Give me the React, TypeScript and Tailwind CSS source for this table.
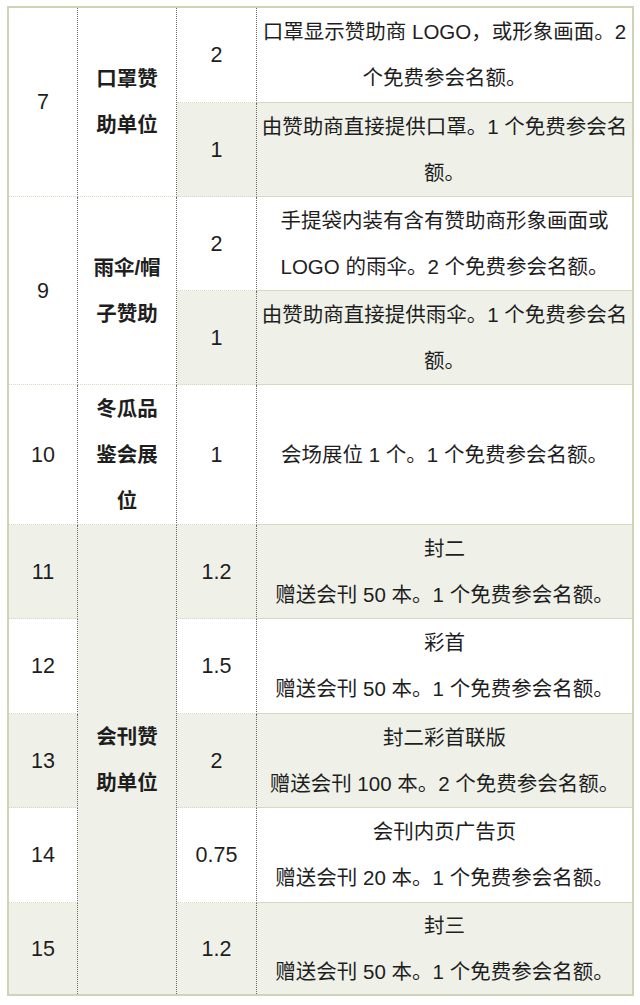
import React from 'react';

const font = { fontFamily: '"Liberation Sans", "Noto Sans CJK SC", sans-serif' };

type CellProps = {
  pos: string;
  gray?: boolean;
  last?: boolean;
  bottom?: boolean;
  bold?: boolean;
  num?: boolean;
  children: React.ReactNode;
};

function Cell({ pos, gray, last, bottom, bold, num, children }: CellProps) {
  return (
    <div
      className={[
        pos,
        'flex flex-col items-center justify-center text-center whitespace-nowrap leading-[46px] text-[#1e1e1e]',
        num ? 'text-[21.5px]' : 'text-[20.5px]',
        gray ? 'bg-[#eff1e9]' : 'bg-white',
        last ? '' : 'border-r border-dotted border-r-[#6a6a6a]',
        bottom ? '' : 'border-b border-b-[#d3dbbf]',
        bold ? 'font-bold' : 'font-normal',
      ].join(' ')}
    >
      {children}
    </div>
  );
}

export default function App() {
  return (
    <div className="min-h-screen bg-white pt-[6px] pl-[7px]" style={font}>
      <div className="grid w-fit grid-cols-[69px_99px_80px_375px] grid-rows-[95px_94px_94px_94px_140px_94px_95px_94px_95px_91px] border-2 border-[#cdd5b6]">
        {/* 7 */}
        <Cell pos="col-start-1 row-start-1 row-span-2" num>7</Cell>
        <Cell pos="col-start-2 row-start-1 row-span-2" bold>
          <span>口罩赞</span>
          <span>助单位</span>
        </Cell>
        <Cell pos="col-start-3 row-start-1" num>2</Cell>
        <Cell pos="col-start-4 row-start-1" last>
          <span>口罩显示赞助商 LOGO，或形象画面。2</span>
          <span>个免费参会名额。</span>
        </Cell>
        <Cell pos="col-start-3 row-start-2" gray num>1</Cell>
        <Cell pos="col-start-4 row-start-2" gray last>
          <span>由赞助商直接提供口罩。1 个免费参会名</span>
          <span>额。</span>
        </Cell>

        {/* 9 */}
        <Cell pos="col-start-1 row-start-3 row-span-2" num>9</Cell>
        <Cell pos="col-start-2 row-start-3 row-span-2" bold>
          <span>雨伞/帽</span>
          <span>子赞助</span>
        </Cell>
        <Cell pos="col-start-3 row-start-3" num>2</Cell>
        <Cell pos="col-start-4 row-start-3" last>
          <span>手提袋内装有含有赞助商形象画面或</span>
          <span>LOGO 的雨伞。2 个免费参会名额。</span>
        </Cell>
        <Cell pos="col-start-3 row-start-4" gray num>1</Cell>
        <Cell pos="col-start-4 row-start-4" gray last>
          <span>由赞助商直接提供雨伞。1 个免费参会名</span>
          <span>额。</span>
        </Cell>

        {/* 10 */}
        <Cell pos="col-start-1 row-start-5" num>10</Cell>
        <Cell pos="col-start-2 row-start-5" bold>
          <span>冬瓜品</span>
          <span>鉴会展</span>
          <span>位</span>
        </Cell>
        <Cell pos="col-start-3 row-start-5" num>1</Cell>
        <Cell pos="col-start-4 row-start-5" last>
          会场展位 1 个。1 个免费参会名额。
        </Cell>

        {/* 11 - 15 */}
        <Cell pos="col-start-2 row-start-6 row-span-5" gray bold bottom>
          <span>会刊赞</span>
          <span>助单位</span>
        </Cell>

        <Cell pos="col-start-1 row-start-6" gray num>11</Cell>
        <Cell pos="col-start-3 row-start-6" gray num>1.2</Cell>
        <Cell pos="col-start-4 row-start-6" gray last>
          <span>封二</span>
          <span>赠送会刊 50 本。1 个免费参会名额。</span>
        </Cell>

        <Cell pos="col-start-1 row-start-7" num>12</Cell>
        <Cell pos="col-start-3 row-start-7" num>1.5</Cell>
        <Cell pos="col-start-4 row-start-7" last>
          <span>彩首</span>
          <span>赠送会刊 50 本。1 个免费参会名额。</span>
        </Cell>

        <Cell pos="col-start-1 row-start-8" gray num>13</Cell>
        <Cell pos="col-start-3 row-start-8" gray num>2</Cell>
        <Cell pos="col-start-4 row-start-8" gray last>
          <span>封二彩首联版</span>
          <span>赠送会刊 100 本。2 个免费参会名额。</span>
        </Cell>

        <Cell pos="col-start-1 row-start-9" num>14</Cell>
        <Cell pos="col-start-3 row-start-9" num>0.75</Cell>
        <Cell pos="col-start-4 row-start-9" last>
          <span>会刊内页广告页</span>
          <span>赠送会刊 20 本。1 个免费参会名额。</span>
        </Cell>

        <Cell pos="col-start-1 row-start-10" gray bottom num>15</Cell>
        <Cell pos="col-start-3 row-start-10" gray bottom num>1.2</Cell>
        <Cell pos="col-start-4 row-start-10" gray last bottom>
          <span>封三</span>
          <span>赠送会刊 50 本。1 个免费参会名额。</span>
        </Cell>
      </div>
    </div>
  );
}
